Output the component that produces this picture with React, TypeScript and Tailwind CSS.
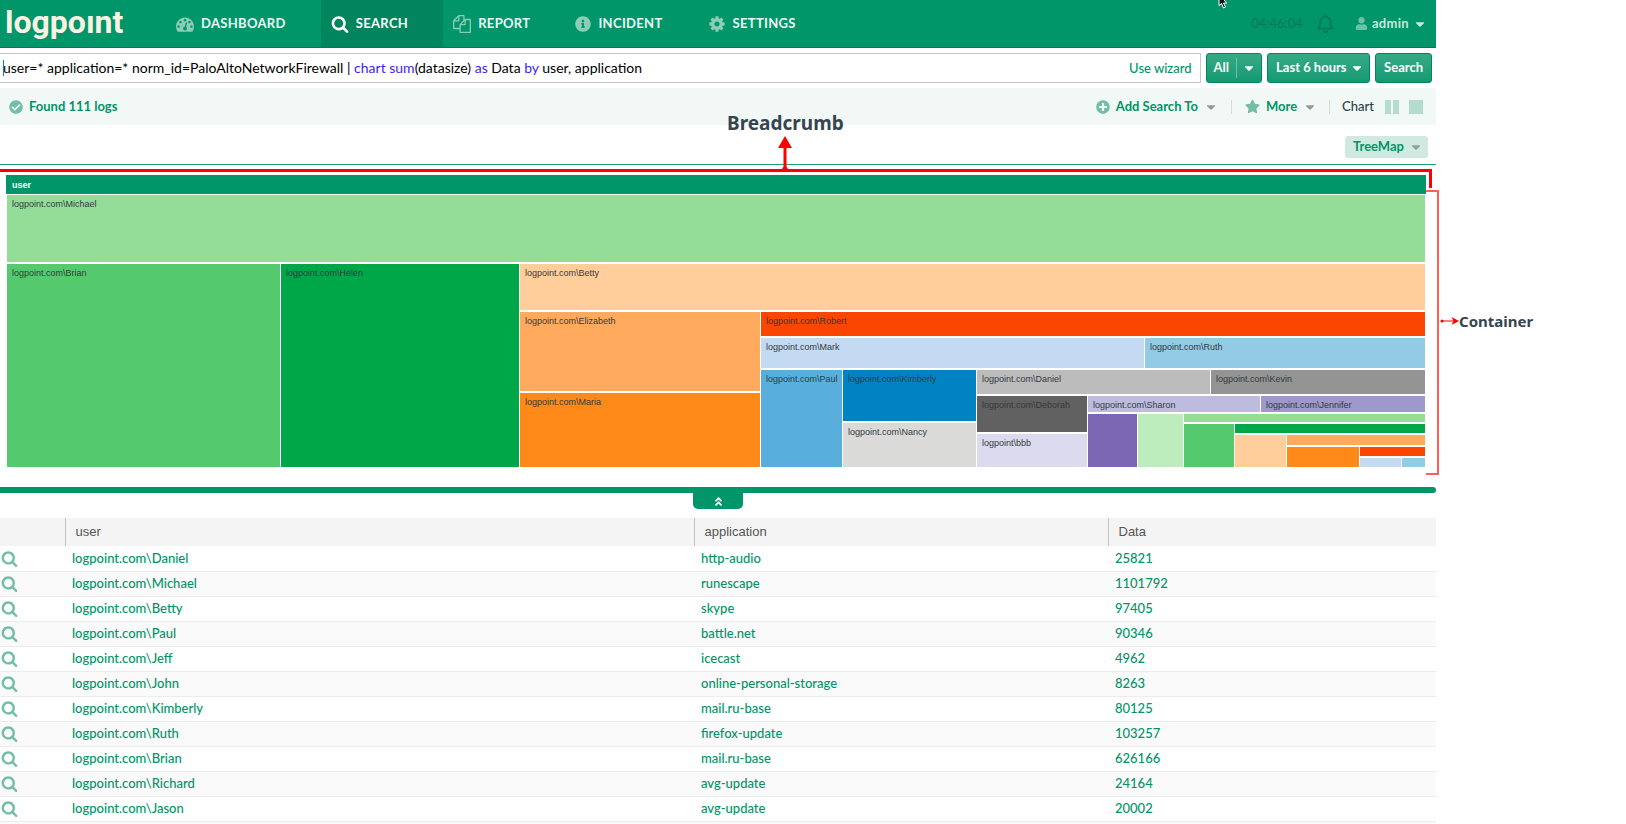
import type { ReactNode } from 'react'
import {
  FaAngleDoubleUp,
  FaCaretDown,
  FaCheckCircle,
  FaInfoCircle,
  FaPlusCircle,
  FaRegBell,
  FaStar,
  FaUser,
} from 'react-icons/fa'

type Cell = { size: number; color: string; label?: string }
type Split = { size: number; dir: 'row' | 'col'; children: TreeNode[] }
type TreeNode = Cell | Split

const cell = (size: number, color: string, label?: string): Cell => ({ size, color, label })
const row = (size: number, ...children: TreeNode[]): Split => ({ size, dir: 'row', children })
const col = (size: number, ...children: TreeNode[]): Split => ({ size, dir: 'col', children })

// Every level is split in two directions by turns, biggest user first
const TREE: TreeNode[] = [
  cell(69, '#94dd98', 'logpoint.com\\Michael'),
  row(205,
    cell(274, '#55c96d', 'logpoint.com\\Brian'),
    cell(239, '#00a748', 'logpoint.com\\Helen'),
    col(906,
      cell(48, '#ffce9b', 'logpoint.com\\Betty'),
      row(157,
        col(241,
          cell(81, '#ffaa5d', 'logpoint.com\\Elizabeth'),
          cell(76, '#ff8918', 'logpoint.com\\Maria'),
        ),
        col(665,
          cell(26, '#fa4600', 'logpoint.com\\Robert'),
          row(32, cell(384, '#c3daf2', 'logpoint.com\\Mark'), cell(281, '#93cae5', 'logpoint.com\\Ruth')),
          row(99,
            cell(82, '#58afdb', 'logpoint.com\\Paul'),
            col(134, cell(53, '#0082c3', 'logpoint.com\\Kimberly'), cell(46, '#dadad8', 'logpoint.com\\Nancy')),
            col(449,
              row(26, cell(234, '#bcbcbc', 'logpoint.com\\Daniel'), cell(215, '#949494', 'logpoint.com\\Kevin')),
              row(73,
                col(111, cell(38, '#616161', 'logpoint.com\\Deborah'), cell(35, '#dbdaee', 'logpoint\\bbb')),
                col(338,
                  row(18, cell(173, '#bdbcdf', 'logpoint.com\\Sharon'), cell(165, '#9f98cb', 'logpoint.com\\Jennifer')),
                  row(55,
                    cell(50, '#7b67b4'),
                    cell(46, '#bdecbd'),
                    col(242,
                      cell(10, '#94dd98'),
                      row(45,
                        cell(51, '#55c96d'),
                        col(191,
                          cell(11, '#00a748'),
                          row(34,
                            cell(52, '#ffce9b'),
                            col(139,
                              cell(12, '#ffaa5d'),
                              row(22,
                                cell(73, '#ff8918'),
                                col(66,
                                  cell(11, '#fa4600'),
                                  row(11, cell(42, '#c3daf2'), cell(24, '#93cae5')),
                                ),
                              ),
                            ),
                          ),
                        ),
                      ),
                    ),
                  ),
                ),
              ),
            ),
          ),
        ),
      ),
    ),
  ),
]

const LOGS = [
  { user: 'logpoint.com\\Daniel', application: 'http-audio', data: 25821 },
  { user: 'logpoint.com\\Michael', application: 'runescape', data: 1101792 },
  { user: 'logpoint.com\\Betty', application: 'skype', data: 97405 },
  { user: 'logpoint.com\\Paul', application: 'battle.net', data: 90346 },
  { user: 'logpoint.com\\Jeff', application: 'icecast', data: 4962 },
  { user: 'logpoint.com\\John', application: 'online-personal-storage', data: 8263 },
  { user: 'logpoint.com\\Kimberly', application: 'mail.ru-base', data: 80125 },
  { user: 'logpoint.com\\Ruth', application: 'firefox-update', data: 103257 },
  { user: 'logpoint.com\\Brian', application: 'mail.ru-base', data: 626166 },
  { user: 'logpoint.com\\Richard', application: 'avg-update', data: 24164 },
  { user: 'logpoint.com\\Jason', application: 'avg-update', data: 20002 },
]

const QUERY = 'user=* application=* norm_id=PaloAltoNetworkFirewall | chart sum(datasize) as Data by user, application'

const PATHS = {
  dashboard:
    'M384 1152q0-53-37.5-90.5t-90.5-37.5-90.5 37.5-37.5 90.5 37.5 90.5 90.5 37.5 90.5-37.5 37.5-90.5zm192-448q0-53-37.5-90.5t-90.5-37.5-90.5 37.5-37.5 90.5 37.5 90.5 90.5 37.5 90.5-37.5 37.5-90.5zm428 481l101-382q6-26-7.5-48.5t-38.5-29.5-48 6.5-30 39.5l-101 382q-60 5-107 43.5t-63 98.5q-20 77 20 146t117 89 146-20 89-117q16-60-6-117t-72-91zm660-33q0-53-37.5-90.5t-90.5-37.5-90.5 37.5-37.5 90.5 37.5 90.5 90.5 37.5 90.5-37.5 37.5-90.5zm-640-640q0-53-37.5-90.5t-90.5-37.5-90.5 37.5-37.5 90.5 37.5 90.5 90.5 37.5 90.5-37.5 37.5-90.5zm448 192q0-53-37.5-90.5t-90.5-37.5-90.5 37.5-37.5 90.5 37.5 90.5 90.5 37.5 90.5-37.5 37.5-90.5zm320 448q0 261-141 483-19 29-54 29h-1402q-35 0-54-29-141-221-141-483 0-182 71-348t191-286 286-191 348-71 348 71 286 191 191 286 71 348z',
  search:
    'M1216 832q0-185-131.5-316.5t-316.5-131.5-316.5 131.5-131.5 316.5 131.5 316.5 316.5 131.5 316.5-131.5 131.5-316.5zm512 832q0 52-38 90t-90 38q-54 0-90-38l-343-342q-179 124-399 124-143 0-273.5-55.5t-225-150-150-225-55.5-273.5 55.5-273.5 150-225 225-150 273.5-55.5 273.5 55.5 225 150 150 225 55.5 273.5q0 220-124 399l343 343q37 37 37 90z',
  report:
    'M1696 384q40 0 68 28t28 68v1216q0 40-28 68t-68 28h-960q-40 0-68-28t-28-68v-288h-544q-40 0-68-28t-28-68v-672q0-40 20-88t48-76l408-408q28-28 76-48t88-20h416q40 0 68 28t28 68v328q68-40 128-40h416zm-544 213l-299 299h299v-299zm-640-384l-299 299h299v-299zm196 647l316-316v-416h-384v416q0 40-28 68t-68 28h-416v640h512v-256q0-40 20-88t48-76zm956 804v-1152h-384v416q0 40-28 68t-68 28h-416v640h896z',
  settings:
    'M1152 896q0-106-75-181t-181-75-181 75-75 181 75 181 181 75 181-75 75-181zm512-109v222q0 12-8 23t-20 13l-185 28q-19 54-39 91 35 50 107 138 10 12 10 25t-9 23q-27 37-99 108t-94 71q-12 0-26-9l-138-108q-44 23-91 38-16 136-29 186-7 28-36 28h-222q-14 0-24.5-8.5t-11.5-21.5l-28-184q-49-16-90-37l-141 107q-10 9-25 9-14 0-25-11-126-114-165-168-7-10-7-23 0-12 8-23 15-21 51-66.5t54-70.5q-27-50-41-99l-183-27q-13-2-21-12.5t-8-23.5v-222q0-12 8-23t19-13l186-28q14-46 39-92-40-57-107-138-10-12-10-24 0-10 9-23 26-36 98.5-107.5t94.5-71.5q13 0 26 10l138 107q44-23 91-38 16-136 29-186 7-28 36-28h222q14 0 24.5 8.5t11.5 21.5l28 184q49 16 90 37l142-107q9-9 24-9 13 0 25 10 129 119 165 170 7 8 7 22 0 12-8 23-15 21-51 66.5t-54 70.5q26 50 41 98l183 28q13 2 21 12.5t8 23.5z',
}

function Glyph({ name, className }: { name: keyof typeof PATHS; className: string }) {
  return (
    <svg viewBox="0 0 1792 1792" fill="currentColor" className={className} aria-hidden="true">
      <path d={PATHS[name]} />
    </svg>
  )
}

function NavItem({ icon, label, active }: { icon: ReactNode; label: string; active?: boolean }) {
  return (
    <a
      href="#"
      className={`flex items-center gap-[7px] pl-[10px] pr-[35px] font-bold tracking-wide ${
        active ? 'bg-[#00855d] text-white' : 'text-[#eef8f4]'
      }`}
    >
      <span className={active ? 'text-white' : 'text-[#8ccdb7]'}>{icon}</span>
      {label}
    </a>
  )
}

function TreeMapNode({ node }: { node: TreeNode }) {
  if ('children' in node) {
    return (
      <div
        className={`flex min-w-0 min-h-0 basis-0 ${node.dir === 'row' ? 'flex-row' : 'flex-col'}`}
        style={{ flexGrow: node.size }}
      >
        {node.children.map((child, i) => (
          <TreeMapNode key={i} node={child} />
        ))}
      </div>
    )
  }
  return (
    <div className="flex min-w-0 min-h-0 basis-0" style={{ flexGrow: node.size }}>
      <div
        className="min-w-0 flex-1 overflow-hidden border-r border-b-2 border-white"
        style={{ backgroundColor: node.color }}
      >
        {node.label && (
          <p className="pt-[3px] pl-[5px] font-['Liberation_Sans',Arial,sans-serif] text-[9px] leading-[12px] whitespace-nowrap text-[#333b42]">
            {node.label}
          </p>
        )}
      </div>
    </div>
  )
}

export default function App() {
  return (
    <div className="flex h-screen overflow-hidden bg-white pr-[190px] font-[Lato,sans-serif] text-[13px] text-[#009467]">
      <div className="flex min-w-0 flex-1 flex-col">
        {/* Top bar */}
        <header className="relative flex h-12 shrink-0 items-stretch border-b border-[#007a55] bg-[#009669]">
          <a
            href="#"
            aria-label="logpoint"
            className="w-[166px] pl-[5px] font-[Roboto,sans-serif] text-[32px] leading-[45px] font-bold text-[#fbf3e2]"
          >
            logpoınt
          </a>
          <nav className="flex">
            <NavItem icon={<Glyph name="dashboard" className="size-[18px]" />} label="DASHBOARD" />
            <NavItem icon={<Glyph name="search" className="size-[18px]" />} label="SEARCH" active />
            <NavItem icon={<Glyph name="report" className="size-[18px]" />} label="REPORT" />
            <NavItem icon={<FaInfoCircle className="size-4" />} label="INCIDENT" />
            <NavItem icon={<Glyph name="settings" className="size-[18px]" />} label="SETTINGS" />
          </nav>
          <div className="ml-auto flex items-center pr-[9px]">
            <time className="mr-[13px] text-[#007a55]">04:46:04</time>
            <button type="button" aria-label="Notifications" className="mr-5 text-[#007a55]">
              <FaRegBell className="size-[19px]" />
            </button>
            <button type="button" className="flex items-center gap-1 font-bold tracking-wide text-[#c9e8dd]">
              <FaUser className="size-[13px] text-[#6fc0a5]" />
              admin
              <FaCaretDown className="size-[14px]" />
            </button>
          </div>
          <svg viewBox="0 0 10 9" className="absolute top-0 right-[208px] h-[9px] w-[10px]" aria-hidden="true">
            <path d="M1 -5 L1 5.500 L3.500 3.500 L5.500 8 L7.500 7 L5.500 3 L9 3 Z" fill="#111" stroke="#fff" />
          </svg>
        </header>

        {/* Query bar */}
        <div className="flex h-[30px] shrink-0 gap-[5px] mt-[5px] mb-[5px] pr-[4px]">
          <div className="relative flex flex-1 items-center border border-l-0 border-[#c8c8c8] pr-2 pl-[3px] text-sm">
            <p aria-hidden="true" className="flex-1 whitespace-pre text-black">
              user=* application=* norm_id=PaloAltoNetworkFirewall | <span className="text-[#3b1ef0]">chart sum</span>
              (datasize) <span className="text-[#3b1ef0]">as</span> Data <span className="text-[#3b1ef0]">by</span> user,
              application
            </p>
            <input
              aria-label="Search query"
              defaultValue={QUERY}
              className="absolute inset-0 w-full bg-transparent pl-[3px] text-transparent caret-[#009467] outline-none"
            />
            <span className="absolute left-[3px] h-4 w-px bg-[#009467]" />
            <a href="#" className="relative text-[13px] font-medium">Use wizard</a>
          </div>
          <div className="flex rounded-[3px] border border-[#00855d] bg-gradient-to-b from-[#36aa88] to-[#109a70] font-bold text-white">
            <button type="button" className="px-[7px]">All</button>
            <button type="button" aria-label="Choose repos" className="my-1 border-l border-[#6fc0a5] px-[5px]">
              <FaCaretDown className="size-[14px]" />
            </button>
          </div>
          <div className="relative">
            <select
              aria-label="Time range"
              className="h-full appearance-none rounded-[3px] border border-[#00855d] bg-gradient-to-b from-[#36aa88] to-[#109a70] pr-[22px] pl-2 font-bold text-white"
            >
              <option>Last 6 hours</option>
            </select>
            <FaCaretDown className="pointer-events-none absolute top-2 right-[6px] size-[14px] text-white" />
          </div>
          <button
            type="button"
            className="rounded-[3px] border border-[#00855d] bg-gradient-to-b from-[#36aa88] to-[#109a70] px-2 font-bold text-white"
          >
            Search
          </button>
        </div>

        {/* Result toolbar */}
        <div className="flex h-[37px] shrink-0 items-center bg-[#f2f8f6] pr-[13px] pl-[9px]">
          <FaCheckCircle className="mr-[6px] size-[14px] text-[#73bfa5]" />
          <span className="font-bold">Found 111 logs</span>
          <div className="ml-auto flex items-center">
            <button type="button" className="flex items-center gap-[6px] font-bold">
              <FaPlusCircle className="size-[14px] text-[#73bfa5]" />
              Add Search To
              <FaCaretDown className="size-[14px] text-[#999]" />
            </button>
            <span className="mx-[13px] h-[14px] w-px bg-[#d5dcd9]" />
            <button type="button" className="flex items-center gap-[6px] font-bold">
              <FaStar className="size-[15px] text-[#73bfa5]" />
              More
              <FaCaretDown className="size-[14px] text-[#999]" />
            </button>
            <span className="mx-[12px] h-[14px] w-px bg-[#d5dcd9]" />
            <span className="mr-[11px] font-medium text-[#2c3e48]">Chart</span>
            <button type="button" aria-label="Split view" className="mr-[10px] flex gap-[2px]">
              <span className="h-[14px] w-[6px] bg-[#b5dccf]" />
              <span className="h-[14px] w-[6px] bg-[#b5dccf]" />
            </button>
            <button type="button" aria-label="Single view" className="size-[14px] bg-[#b5dccf]" />
          </div>
        </div>

        <div className="flex h-[39px] shrink-0 items-center justify-end pt-1 pr-2">
          <div className="relative">
            <select
              aria-label="Chart type"
              className="h-[22px] appearance-none rounded-[3px] bg-[#d0eae1] pr-[24px] pl-2 font-bold"
            >
              <option>TreeMap</option>
            </select>
            <FaCaretDown className="pointer-events-none absolute top-1 right-[5px] size-[14px] text-[#8f9f99]" />
          </div>
        </div>

        {/* Chart */}
        <section className="relative flex shrink-0 flex-col border-t border-[#1f9f7b] pt-[10px] pr-[10px] pb-[18px] pl-[6px]">
          <div className="h-[19px] bg-[#009669] pl-[6px] font-['Liberation_Sans',Arial,sans-serif] text-[9px] leading-[20px] font-bold text-white">
            user
          </div>
          <div className="mt-px ml-px flex h-[274px] flex-col">
            {TREE.map((node, i) => (
              <TreeMapNode key={i} node={node} />
            ))}
          </div>

          {/* Callouts */}
          <div className="absolute top-[4px] right-[4px] left-0 h-[19px] border-t-3 border-r-3 border-[#ff0000]" />
          <div className="absolute top-[25px] -right-[3px] h-[285px] w-[13px] border-2 border-l-0 border-[#ff5f55]" />
          <div className="absolute -top-[55px] left-[727px] flex flex-col items-center font-['Noto_Sans',sans-serif] font-bold text-[#36454f]">
            <span className="text-[19px] leading-[26px]">Breadcrumb</span>
            <svg viewBox="0 0 14 35" className="h-[35px] w-[14px]" aria-hidden="true">
              <path d="M7 0 L14 12 H8.500 V35 H5.500 V12 H0 Z" fill="#f00" />
              <path d="M4 33 Q7 27 10 33 Z" fill="#f00" />
            </svg>
          </div>
          <div className="absolute top-[146px] left-full flex items-center pl-[4px] font-['Noto_Sans',sans-serif] font-bold text-[#36454f]">
            <svg viewBox="0 0 19 8" className="h-[8px] w-[19px]" aria-hidden="true">
              <path d="M1 4 H14" stroke="#f00" />
              <circle cx="2" cy="4" r="1.500" fill="#f00" />
              <path d="M11.500 0 L19 4 L11.500 8 L13.500 4 Z" fill="#f00" />
            </svg>
            <span className="text-[15px] leading-[20px]">Container</span>
          </div>
        </section>

        {/* Collapse handle */}
        <div className="flex h-[31px] shrink-0 flex-col items-center">
          <div className="h-[6px] w-full rounded-r-[3px] bg-[#009669]" />
          <button
            type="button"
            aria-label="Collapse chart"
            className="flex h-4 w-[50px] items-center justify-center rounded-b-[5px] bg-[#009669] text-white"
          >
            <FaAngleDoubleUp className="size-[11px]" />
          </button>
        </div>

        {/* Results */}
        <div className="min-h-0 flex-1 bg-[#fafafa]">
          <table className="w-full table-fixed border-collapse bg-white text-left">
            <colgroup>
              <col className="w-[65px]" />
              <col className="w-[629px]" />
              <col className="w-[414px]" />
              <col />
            </colgroup>
            <thead>
              <tr className="h-7 bg-[#f4f4f4] font-['Liberation_Sans',Arial,sans-serif] text-[13px] text-[#555]">
                <th aria-label="Drill down" />
                <th className="border-l border-[#c4c4c4] p-0 pl-[10px] font-normal">user</th>
                <th className="border-l border-[#c4c4c4] p-0 pl-[10px] font-normal">application</th>
                <th className="border-l border-[#c4c4c4] p-0 pl-[10px] font-normal">Data</th>
              </tr>
            </thead>
            <tbody>
              {LOGS.map((log, i) => (
                <tr key={i} className="h-[25px] border-b border-[#ececec] font-medium even:bg-[#fafafa]">
                  <td className="p-0 pl-px">
                    <button type="button" aria-label={`Search ${log.user}`} className="block text-[#73bfa5]">
                      <Glyph name="search" className="size-[17px]" />
                    </button>
                  </td>
                  <td className="p-0 pl-[7px]">{log.user}</td>
                  <td className="p-0 pl-[7px]">{log.application}</td>
                  <td className="p-0 pl-[7px]">{log.data}</td>
                </tr>
              ))}
            </tbody>
          </table>
        </div>
      </div>
    </div>
  )
}
